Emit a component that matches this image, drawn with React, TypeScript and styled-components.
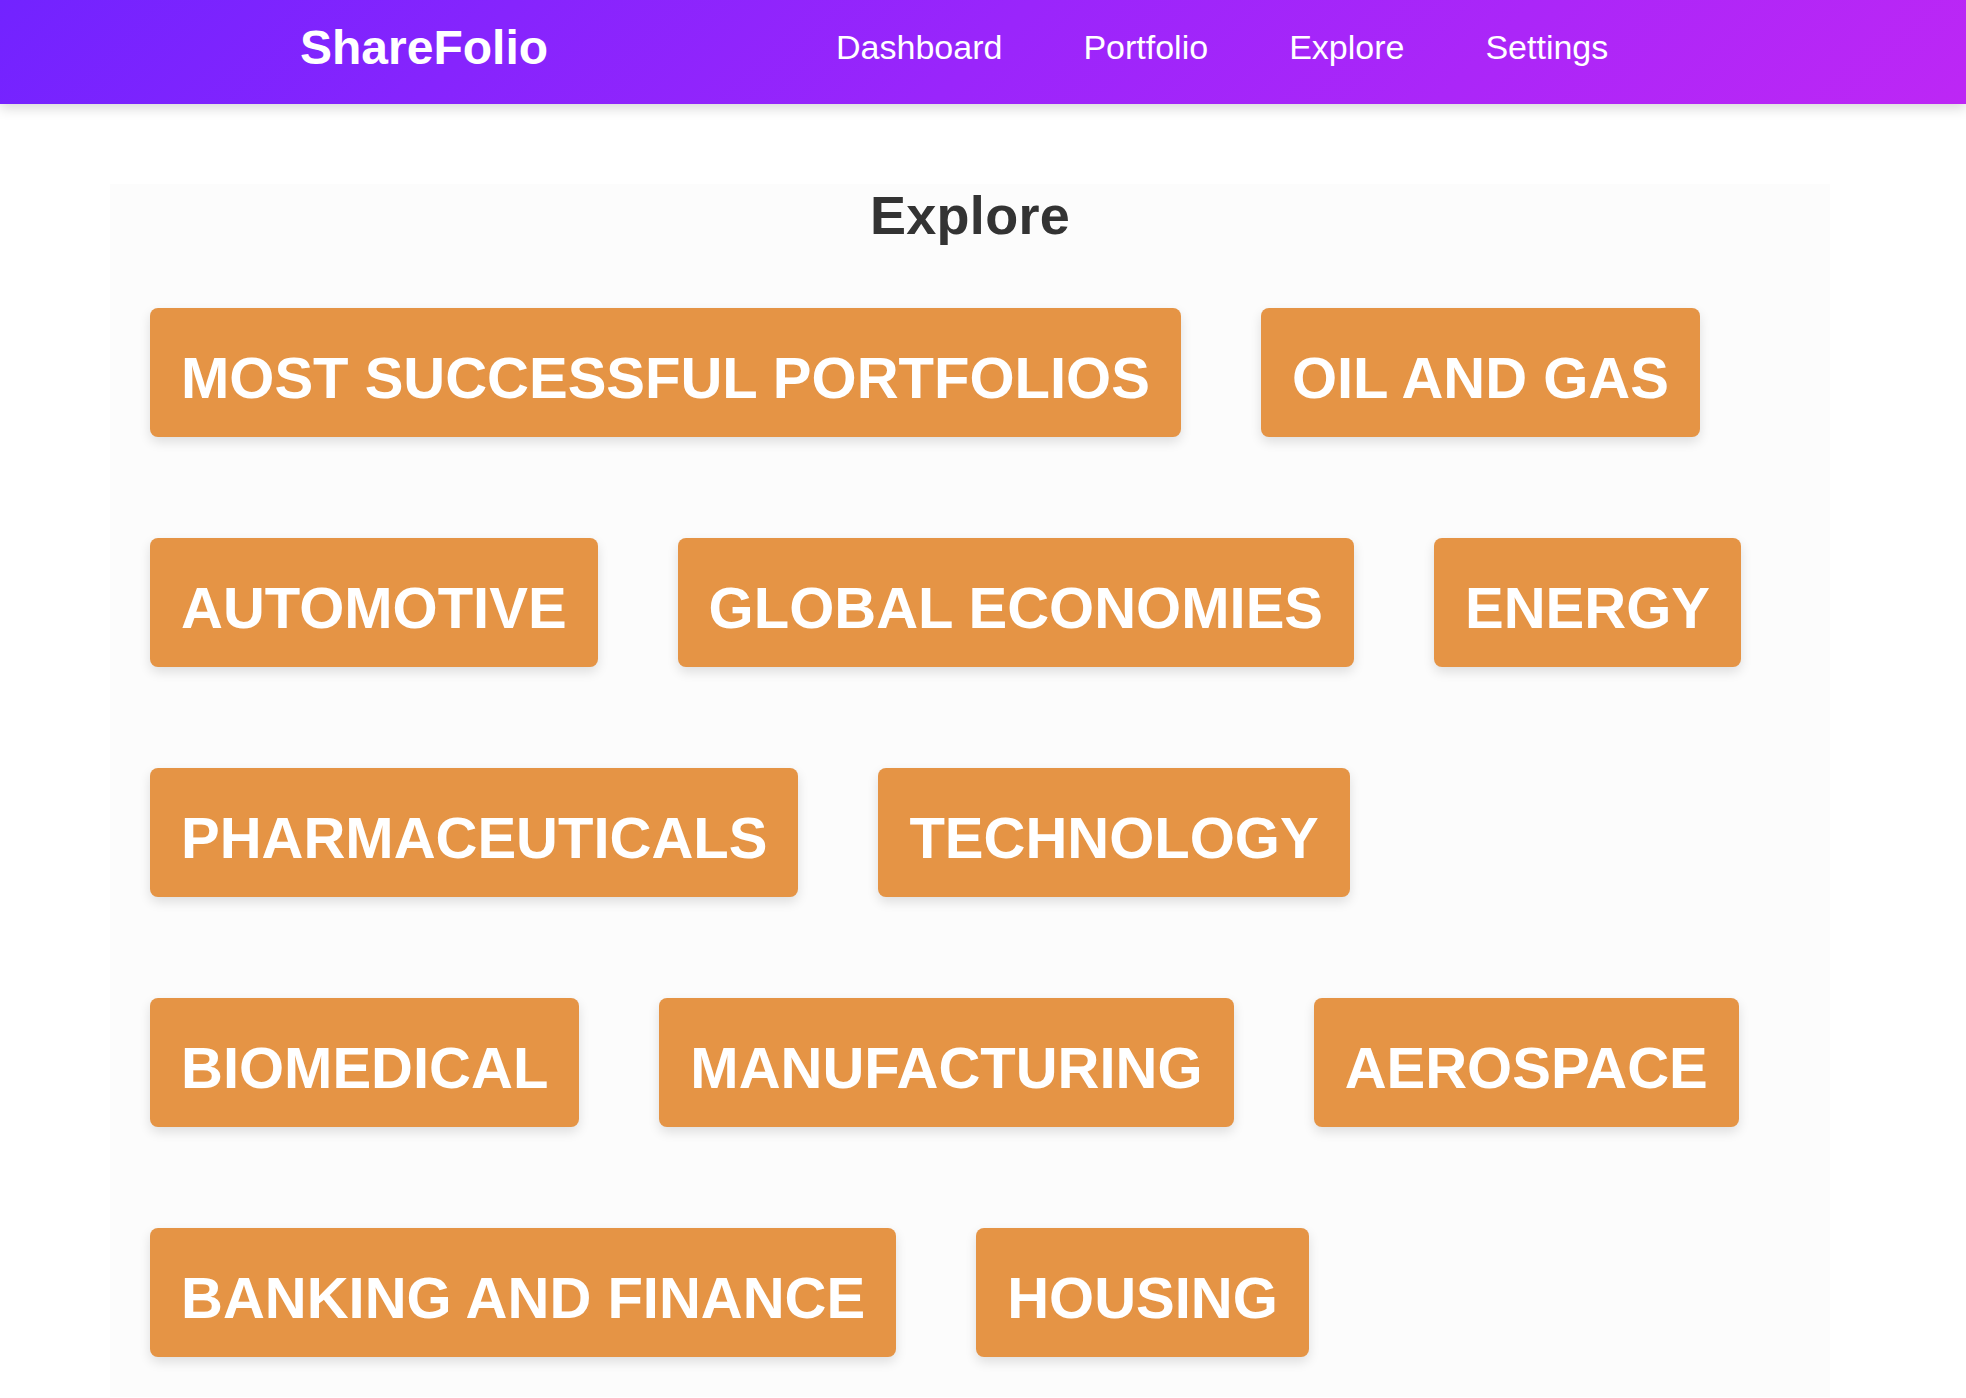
import React from "react";
import styled, { createGlobalStyle } from "styled-components";

const GlobalStyle = createGlobalStyle`
  html, body {
    margin: 0;
    padding: 0;
    background: #ffffff;
    font-family: "Liberation Sans", Arial, Helvetica, sans-serif;
  }
  * { box-sizing: border-box; }
`;

const NavBar = styled.header`
  height: 104px;
  display: flex;
  align-items: center;
  padding: 0 0 9px 300px;
  background: linear-gradient(135deg, #7223ff 0%, #9a25fb 50%, #bd27f5 100%);
  box-shadow: 0 4px 12px rgba(0, 0, 0, 0.16);
  position: relative;
  z-index: 1;
`;

const Logo = styled.div`
  color: #ffffff;
  font-size: 48px;
  font-weight: 700;
  line-height: 1.15;
`;

const NavLinks = styled.nav`
  display: flex;
  gap: 81px;
  margin-left: 288px;
`;

const NavLink = styled.a`
  color: #ffffff;
  font-size: 34px;
  font-weight: 400;
  line-height: 1.15;
  text-decoration: none;
  cursor: pointer;
`;

const Panel = styled.main`
  width: 1720px;
  margin: 80px 0 0 110px;
  padding: 0 40px 40px 40px;
  background: #fcfcfc;
`;

const Heading = styled.h1`
  margin: 0;
  text-align: center;
  color: #333333;
  font-size: 54px;
  font-weight: 700;
  letter-spacing: 0.3px;
  line-height: 62px;
`;

const CategoryGrid = styled.div`
  display: flex;
  flex-wrap: wrap;
  align-items: flex-start;
  gap: 101px 80px;
  margin-top: 62px;
`;

const CategoryButton = styled.button`
  border: none;
  border-radius: 8px;
  background: #e59445;
  color: #ffffff;
  font-family: "Liberation Sans", Arial, Helvetica, sans-serif;
  font-size: 58px;
  font-weight: 700;
  line-height: 66px;
  letter-spacing: 0;
  padding: 37px 31px 26px 31px;
  text-transform: uppercase;
  box-shadow: 0 5px 12px rgba(0, 0, 0, 0.12);
  cursor: pointer;
  white-space: nowrap;
`;

const links = ["Dashboard", "Portfolio", "Explore", "Settings"];

const categories = [
  "Most Successful Portfolios",
  "Oil and Gas",
  "Automotive",
  "Global Economies",
  "Energy",
  "Pharmaceuticals",
  "Technology",
  "Biomedical",
  "Manufacturing",
  "Aerospace",
  "Banking and Finance",
  "Housing",
];

export default function App() {
  return (
    <>
      <GlobalStyle />
      <NavBar>
        <Logo>ShareFolio</Logo>
        <NavLinks>
          {links.map((l) => (
            <NavLink key={l}>{l}</NavLink>
          ))}
        </NavLinks>
      </NavBar>
      <Panel>
        <Heading>Explore</Heading>
        <CategoryGrid>
          {categories.map((c) => (
            <CategoryButton key={c}>{c}</CategoryButton>
          ))}
        </CategoryGrid>
      </Panel>
    </>
  );
}
